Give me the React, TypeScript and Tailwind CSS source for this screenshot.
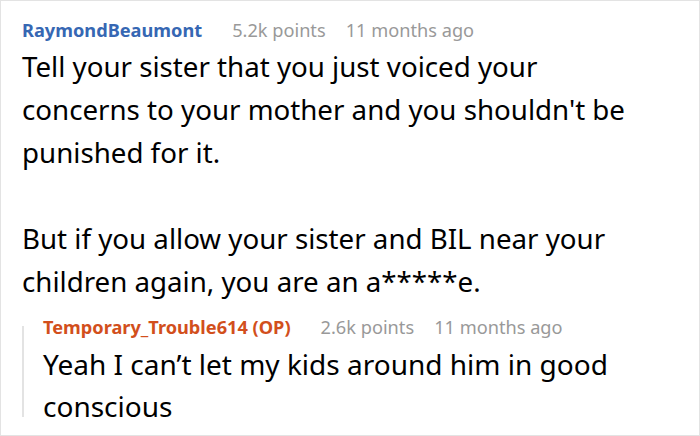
import React from 'react';

const font = { fontFamily: '"Noto Sans", "Open Sans", sans-serif' };

const Meta = ({ name, color, points, when, size }: { name: string; color: string; points: string; when: string; size: string }) => (
  <div className={`flex items-baseline leading-[18px] ${size}`}>
    <span className={`font-bold ${color}`}>{name}</span>
    <span className="ml-[30px] text-[#999999]">{points}</span>
    <span className="ml-[20px] text-[#999999]">{when}</span>
  </div>
);

const App = () => {
  return (
    <div style={font} className="w-[700px] h-[436px] bg-white border border-[#e3e3e3] overflow-hidden pl-[21px] pt-[20px]">
      <Meta name="RaymondBeaumont" color="text-[#3667b3]" points="5.2k points" when="11 months ago" size="text-[18.2px]" />
      <div className="text-[27.7px] leading-[43px] text-black mt-[6px] w-[625px]">
        <p>Tell your sister that you just voiced your concerns to your mother and you shouldn't be punished for it.</p>
        <p className="mt-[43px]">But if you allow your sister and BIL near your children again, you are an a*****e.</p>
      </div>
      <div className="mt-[15px] flex">
        <div className="w-[2px] bg-[#e3e3e3] mt-[8px] mb-[10px] shrink-0" />
        <div className="pl-[19px]">
          <Meta name="Temporary_Trouble614 (OP)" color="text-[#d24f1c]" points="2.6k points" when="11 months ago" size="text-[18.2px]" />
          <p className="mt-[7px] text-[28px] leading-[42px] text-black w-[620px]">
            Yeah I can’t let my kids around him in good conscious
          </p>
        </div>
      </div>
    </div>
  );
};

export default App;
